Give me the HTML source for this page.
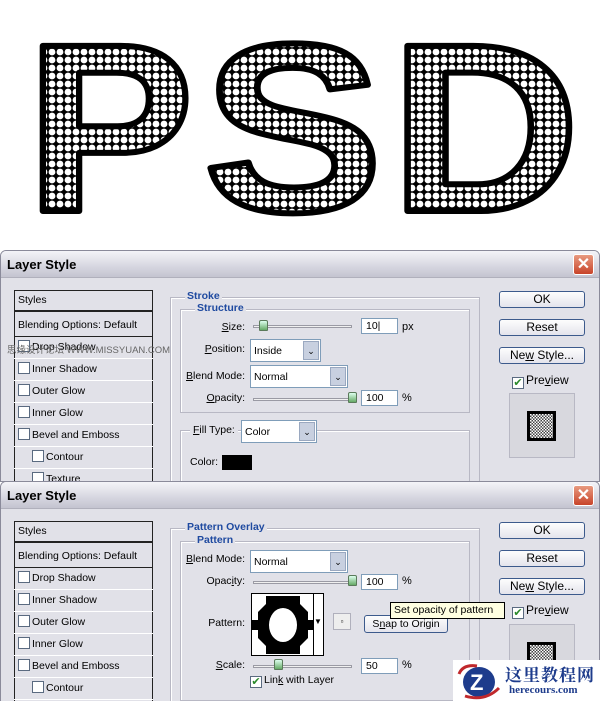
<!DOCTYPE html>
<html style="width:600px;height:701px;overflow:hidden"><head><meta charset="utf-8"><style>
*{margin:0;padding:0;box-sizing:border-box}
body{width:600px;height:701px;overflow:hidden;background:#fff;position:relative;font-family:Tahoma,"Liberation Sans","Noto Sans CJK SC",sans-serif;font-size:11px;color:#000}
.a{position:absolute}
.dlg{position:absolute;left:0;width:600px;background:#e1e1e8;border:1px solid #8a8a9a;border-radius:6px 6px 0 0;overflow:hidden}
.tb{position:absolute;left:0;top:0;width:100%;height:27px;background:linear-gradient(#f4f4f8,#d6d6e0 60%,#c4c4d0);border-bottom:1px solid #b0b0bc}
.tt{position:absolute;left:6px;top:6px;font:bold 13px "Liberation Sans",sans-serif;color:#000}
.x{position:absolute;right:5px;top:3px;width:21px;height:21px;border:1px solid #fff;border-radius:3px;background:linear-gradient(#e89a80,#c8442a);color:#fff;font:bold 16px/19px "Liberation Sans",sans-serif;text-align:center}
.list{position:absolute;left:14px;width:139px;border:1px solid #222;background:#e1e1e8}
.row{position:absolute;left:14px;width:139px;height:22px;border-bottom:1px solid #fff;font-size:10.5px;line-height:21px;padding-left:4px}
.cb{display:inline-block;width:12px;height:12px;border:1px solid #5a6a80;background:#fff;vertical-align:-2px;margin-right:2px}
.grp{position:absolute;border:1px solid #b8b8c4;box-shadow:1px 1px 0 #fff inset}
.lbl{position:absolute;font:bold 10.5px "Liberation Sans",sans-serif;color:#1f4aa0;background:#e1e1e8;padding:0 2px}
.btn{position:absolute;left:499px;width:86px;height:17px;border:1px solid #3c5a8c;border-radius:3px;background:linear-gradient(#fdfdfd,#e4e4ec);text-align:center;font-size:12px;line-height:15px}
.inp{position:absolute;background:#fff;border:1px solid #7f9db9;font-size:10.5px;line-height:14px;padding-left:4px}
.sel{position:absolute;background:#fff;border:1px solid #7f9db9;font-size:10.5px;padding:5px 3px}
.sel i{position:absolute;right:1px;top:1px;bottom:1px;width:16px;background:#c8d0e0;border:1px solid #9aa8c0;font-style:normal;text-align:center;font-size:9px;line-height:18px}
.r{position:absolute;font-size:10.5px;text-align:right;width:80px}
.sl{position:absolute;height:3px;border:1px solid #9a9aa4;background:#f0f0f0}
.th{position:absolute;width:9px;height:11px;background:linear-gradient(#dfe,#6a6);border:1px solid #5a7a5a;border-radius:2px 2px 1px 1px}
</style></head><body>
<svg class="a" style="left:0;top:0" width="600" height="245">
<defs><pattern id="p" width="8" height="8" patternUnits="userSpaceOnUse"><rect width="8" height="8" fill="#000"/><circle cx="4" cy="4" r="3.4" fill="#fff"/></pattern></defs>
<g font-family="Liberation Sans" font-weight="bold" font-size="240" fill="url(#p)" stroke="#000" stroke-width="6" stroke-linejoin="round">
<text x="26" y="211" textLength="168" lengthAdjust="spacingAndGlyphs">P</text>
<text x="203" y="211" textLength="180" lengthAdjust="spacingAndGlyphs">S</text>
<text x="390" y="211" textLength="190" lengthAdjust="spacingAndGlyphs">D</text>
</g></svg>

<!-- dialog 1 -->
<div class="dlg" style="top:250px;height:232px">
<div class="tb"><div class="tt">Layer Style</div><div class="x">✕</div></div>
</div>
<div class="a" style="top:250px;left:0;width:600px;height:232px;overflow:hidden">
<div class="list" style="top:40px;height:195px"></div>
<div class="row" style="top:40px;border-bottom:2px solid #222">Styles</div>
<div class="row" style="top:65px;border-bottom:1px solid #222">Blending Options: Default</div>
<div class="row" style="top:87px"><span class="cb"></span>Drop Shadow</div>
<div class="row" style="top:109px"><span class="cb"></span>Inner Shadow</div>
<div class="row" style="top:131px"><span class="cb"></span>Outer Glow</div>
<div class="row" style="top:153px"><span class="cb"></span>Inner Glow</div>
<div class="row" style="top:175px"><span class="cb"></span>Bevel and Emboss</div>
<div class="row" style="top:197px;padding-left:18px"><span class="cb"></span>Contour</div>
<div class="row" style="top:219px;padding-left:18px"><span class="cb"></span>Texture</div>
<div class="a" style="left:7px;top:92px;font-size:9.5px;color:#666;font-family:'Liberation Sans','Noto Sans CJK SC',sans-serif">思缘设计论坛 WWW.MISSYUAN.COM</div>
<div class="grp" style="left:170px;top:47px;width:310px;height:200px"></div>
<div class="lbl" style="left:185px;top:40px">Stroke</div>
<div class="grp" style="left:180px;top:59px;width:290px;height:104px"></div>
<div class="lbl" style="left:195px;top:52px">Structure</div>
<div class="r" style="left:165px;top:71px"><u>S</u>ize:</div>
<div class="sl" style="left:253px;top:75px;width:99px"></div><div class="th" style="left:259px;top:70px"></div>
<div class="inp" style="left:361px;top:68px;width:37px;height:16px">10|</div><div class="a" style="left:402px;top:71px">px</div>
<div class="r" style="left:165px;top:93px"><u>P</u>osition:</div>
<div class="sel" style="left:250px;top:89px;width:71px;height:23px">Inside<i>⌄</i></div>
<div class="r" style="left:165px;top:120px"><u>B</u>lend Mode:</div>
<div class="sel" style="left:250px;top:115px;width:98px;height:23px">Normal<i>⌄</i></div>
<div class="r" style="left:165px;top:142px"><u>O</u>pacity:</div>
<div class="sl" style="left:253px;top:148px;width:99px"></div><div class="th" style="left:348px;top:142px"></div>
<div class="inp" style="left:361px;top:140px;width:37px;height:16px">100</div><div class="a" style="left:402px;top:142px">%</div>
<div class="grp" style="left:180px;top:180px;width:290px;height:60px"></div>
<div class="a" style="left:190px;top:174px;background:#e1e1e8;padding:0 3px;font-size:10.5px"><u>F</u>ill Type:</div>
<div class="sel" style="left:241px;top:170px;width:76px;height:23px">Color<i>⌄</i></div>
<div class="a" style="left:190px;top:206px;font-size:10.5px">Color:</div>
<div class="a" style="left:222px;top:205px;width:30px;height:15px;background:#000"></div>
<div class="btn" style="top:41px">OK</div>
<div class="btn" style="top:69px">Reset</div>
<div class="btn" style="top:97px">Ne<u>w</u> Style...</div>
<div class="a" style="left:512px;top:123px;font-size:12px"><span class="cb" style="color:#2a8a2a;font-size:11px;line-height:10px;text-align:center">✔</span>Pre<u>v</u>iew</div>
<div class="a" style="left:509px;top:143px;width:66px;height:65px;border:1px solid #b8b8c4;background:#d8d8de"></div>
<div class="a" style="left:527px;top:161px;width:29px;height:30px;border:3px solid #000;background:repeating-conic-gradient(#444 0 25%,#fff 0 50%) 0 0/3px 3px"></div>
</div>

<!-- dialog 2 -->
<div class="dlg" style="top:481px;height:230px">
<div class="tb"><div class="tt">Layer Style</div><div class="x">✕</div></div>
</div>
<div class="a" style="top:481px;left:0;width:600px;height:220px;overflow:hidden">
<div class="list" style="top:40px;height:195px"></div>
<div class="row" style="top:40px;border-bottom:2px solid #222">Styles</div>
<div class="row" style="top:65px;border-bottom:1px solid #222">Blending Options: Default</div>
<div class="row" style="top:87px"><span class="cb"></span>Drop Shadow</div>
<div class="row" style="top:109px"><span class="cb"></span>Inner Shadow</div>
<div class="row" style="top:131px"><span class="cb"></span>Outer Glow</div>
<div class="row" style="top:153px"><span class="cb"></span>Inner Glow</div>
<div class="row" style="top:175px"><span class="cb"></span>Bevel and Emboss</div>
<div class="row" style="top:197px;padding-left:18px"><span class="cb"></span>Contour</div>
<div class="grp" style="left:170px;top:47px;width:310px;height:200px"></div>
<div class="lbl" style="left:185px;top:40px">Pattern Overlay</div>
<div class="grp" style="left:180px;top:60px;width:290px;height:160px"></div>
<div class="lbl" style="left:195px;top:53px">Pattern</div>
<div class="r" style="left:165px;top:72px"><u>B</u>lend Mode:</div>
<div class="sel" style="left:250px;top:69px;width:98px;height:23px">Normal<i>⌄</i></div>
<div class="r" style="left:165px;top:94px">Opac<u>i</u>ty:</div>
<div class="sl" style="left:253px;top:100px;width:99px"></div><div class="th" style="left:348px;top:94px"></div>
<div class="inp" style="left:361px;top:93px;width:37px;height:16px">100</div><div class="a" style="left:402px;top:94px">%</div>
<div class="r" style="left:165px;top:136px">Pattern:</div>
<div class="a" style="left:251px;top:112px;width:73px;height:63px;border:1px solid #000;background:#fff">
<svg width="62" height="61" style="position:absolute;left:0;top:0"><path d="M14 2h34v8l8 8v8h6v10h-6v8l-8 8v8H14v-8l-8-8v-8H0V26h6v-8l8-8z" fill="#000"/><ellipse cx="31" cy="31" rx="14" ry="17" fill="#fff"/></svg>
<div class="a" style="left:61px;top:0;width:1px;height:61px;background:#000"></div>
</div>
<div class="a" style="left:314px;top:136px;font-size:8px">▼</div>
<div class="a" style="left:333px;top:132px;width:18px;height:17px;border:1px solid #b0b0bc;background:#eee;font-size:8px;text-align:center;line-height:15px">▫</div>
<div class="a" style="left:364px;top:134px;width:84px;height:18px;border:1px solid #3c5a8c;border-radius:3px;background:linear-gradient(#fdfdfd,#e4e4ec);font-size:10.5px;text-align:center;line-height:16px">S<u>n</u>ap to Origin</div>
<div class="a" style="left:390px;top:121px;width:115px;height:17px;border:1px solid #000;background:#ffffe1;font-size:10.5px;line-height:15px;padding-left:3px">Set opacity of pattern</div>
<div class="r" style="left:165px;top:178px"><u>S</u>cale:</div>
<div class="sl" style="left:253px;top:184px;width:99px"></div><div class="th" style="left:274px;top:178px"></div>
<div class="inp" style="left:361px;top:177px;width:37px;height:16px">50</div><div class="a" style="left:402px;top:178px">%</div>
<div class="a" style="left:250px;top:193px;font-size:10.5px"><span class="cb" style="color:#2a8a2a;font-size:11px;line-height:10px;text-align:center">✔</span>Lin<u>k</u> with Layer</div>
<div class="btn" style="top:41px">OK</div>
<div class="btn" style="top:69px">Reset</div>
<div class="btn" style="top:97px">Ne<u>w</u> Style...</div>
<div class="a" style="left:512px;top:122px;font-size:12px"><span class="cb" style="color:#2a8a2a;font-size:11px;line-height:10px;text-align:center">✔</span>Pre<u>v</u>iew</div>
<div class="a" style="left:509px;top:143px;width:66px;height:65px;border:1px solid #b8b8c4;background:#d8d8de"></div>
<div class="a" style="left:527px;top:161px;width:29px;height:30px;border:3px solid #000;background:repeating-conic-gradient(#444 0 25%,#fff 0 50%) 0 0/3px 3px"></div>
</div>

<!-- logo -->
<div class="a" style="left:453px;top:660px;width:147px;height:41px;background:#fff">
<svg class="a" style="left:2px;top:2px" width="48" height="38"><ellipse cx="24" cy="20" rx="16" ry="15" fill="#1e3c8c"/><path d="M4 12 Q8 2 22 4" stroke="#c0282c" stroke-width="3" fill="none"/><path d="M10 34 Q30 40 44 26" stroke="#c0282c" stroke-width="3" fill="none"/><text x="15" y="28" font-family="Liberation Sans" font-weight="bold" font-size="22" fill="#fff">Z</text></svg>
<div class="a" style="left:52px;top:1px;font:bold 17px 'Noto Serif CJK SC','Noto Sans CJK SC',serif;color:#1e3c8c;letter-spacing:1px">这里教程网</div>
<div class="a" style="left:56px;top:24px;font:bold 11px 'Liberation Serif',serif;color:#1e3c8c">herecours.com</div>
</div>
</body></html>
